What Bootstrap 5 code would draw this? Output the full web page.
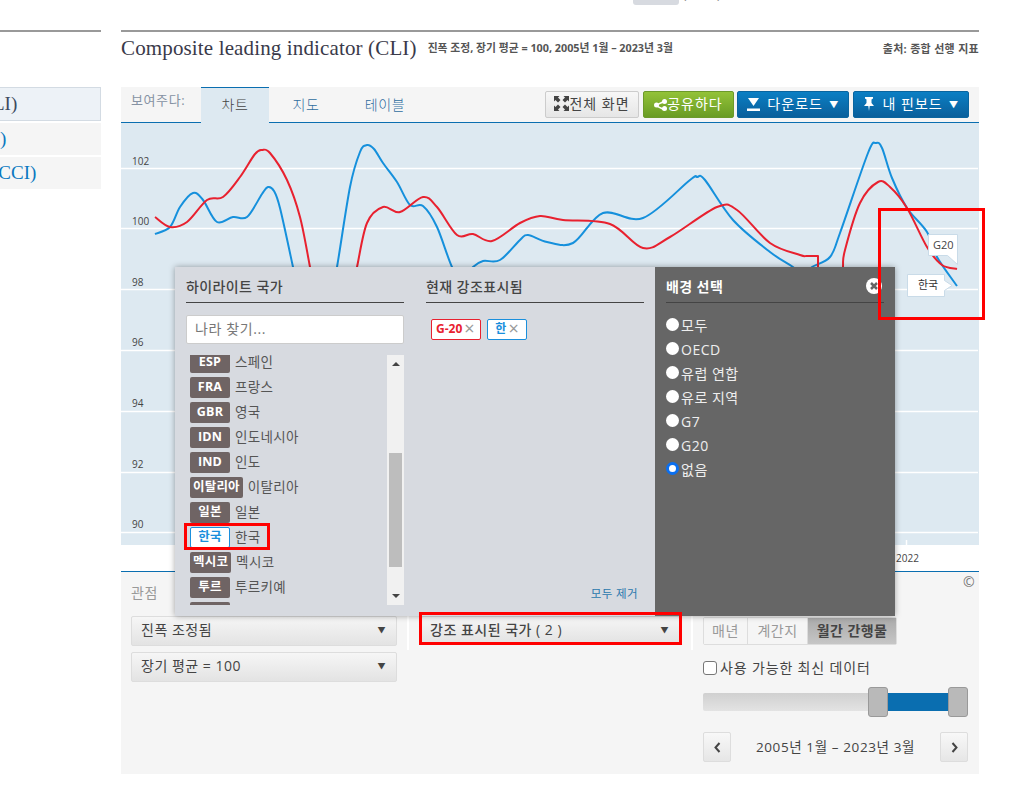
<!DOCTYPE html>
<html lang="ko">
<head>
<meta charset="utf-8">
<title>Composite leading indicator</title>
<link href="https://cdn.jsdelivr.net/npm/bootstrap@5.3.0/dist/css/bootstrap.min.css" rel="stylesheet">
<style>
body{position:relative;width:1035px;height:800px;overflow:hidden;background:#fff;font-family:"Open Sans","Noto Sans CJK KR",sans-serif;font-size:14px;color:#444;letter-spacing:.6px}
.topbar{height:30px;overflow:hidden;padding-left:633px;font-size:12px;color:#888}
.chip{display:inline-block;width:46px;height:20px;margin-top:-15px;background:#d7dae0;border-radius:3px;line-height:20px;text-align:center;color:#777}
.topnote{margin-left:4px;line-height:20px;margin-top:-15px}
.sidecol{width:101px;border-top:2px solid #999;padding-top:55px;font-family:"Liberation Serif","Noto Sans CJK KR",serif;font-size:19px;letter-spacing:0;overflow:hidden}
.sideitem{height:32px;line-height:31px;background:#f5f5f5;margin-bottom:2px;color:#0a78c0;white-space:nowrap}
.sideitem.on{height:34px;background:#edf2f7;border:1px solid #d3dbe3;border-left:0;color:#3b4a60;margin-bottom:2px;text-indent:-7px}
.sideitem.cut{text-indent:-8px}
.maincol{width:858px;margin-left:20px}
.titlerow{height:57px;border-top:2px solid #999;padding-top:3px}
.chart-title{font-family:"Liberation Serif",serif;font-size:21px;letter-spacing:.14px;color:#3a3a4a;line-height:26px;margin:0;font-weight:400}
.chart-sub{font-size:10.8px;font-weight:700;color:#555;letter-spacing:0;margin-left:11px}
.chart-src{font-size:11px;font-weight:700;color:#555;letter-spacing:.3px;padding-top:6px}
.tabbar{height:36px;background:#f5f5f5;border-bottom:1px solid #0a6eb0}
.show-lbl{width:80px;padding:4px 0 0 10px;color:#8592a3;font-size:13px}
.tabitem{height:36px;line-height:34px;text-align:center;color:#2f6d9f;border-top:1px solid transparent;font-weight:300}
.tabitem.on{width:68px;background:#dde9f1;color:#444;border-top-color:#0a6eb0;height:36px}
.tab-m{width:74px}
.tab-t{width:84px}
.tb{height:27px;border-radius:2px;font-size:14px;line-height:24px;white-space:nowrap;padding:0;text-align:center;letter-spacing:1px}
.tb svg{vertical-align:-2px}
.tb-gray{width:94px;background:linear-gradient(#f7f7f7,#e6e6e6);border:1px solid #ccc;color:#444;margin-right:4px}
.tb-green{width:91px;background:linear-gradient(#93c238,#699c24);border:1px solid #6c9a2a;color:#fff;margin-right:3px}
.tb-blue{background:linear-gradient(#0b7fc4,#0a5f9b);border:1px solid #0a659f;color:#fff}
.tb-dl{width:112px;margin-right:4px}
.tb-pin{width:116px}
.tb-arrow{font-size:9px;margin-left:3px;vertical-align:1px}
.tb-ic{margin-right:3px}
.toolset{padding:4px 10px 0 0;margin-left:auto;display:flex}
.chart-wrap{height:449px;border-bottom:1px solid #0a6eb0}
.chart-wrap svg{display:block}
.axis{font-size:10px;fill:#444;letter-spacing:0}
.panel-ctl{height:202px;background:#f5f5f5;position:relative}
.ctlcol{height:202px}
.ctl-a{width:287px;padding:10px 11px 0 10px}
.ctl-b{width:284px;padding:44px 12px 0 13px}
.ctl-c{width:287px;padding:45px 11px 0 11px}
.ctl-lbl{color:#999;font-size:14px;height:34px}
.dd{height:30px;line-height:26px;background:linear-gradient(#f6f6f6,#e3e3e3);border:1px solid #ddd;border-radius:2px;padding:0 10px 0 9px;margin-bottom:6px;display:flex;justify-content:space-between;color:#444;font-size:14px;letter-spacing:.5px}
.dd i{font-style:normal;font-size:8px;color:#444}
.dd-h{height:28px;line-height:25px;font-weight:500;padding-left:8px}
.dd-h b{font-weight:400}
.sepline{position:absolute;top:44px;width:2px;height:34px;background:#fff}
.sl1{left:286px}
.sl2{left:570px}
.seg{display:flex;height:28px;width:194px;font-size:14px;line-height:25px;text-align:center;border:1px solid #ddd;border-radius:2px;color:#999;letter-spacing:.5px}
.seg span{border-right:1px solid #ddd;background:#f5f5f5}
.seg .s1{width:44px}.seg .s2{width:60px}
.seg .s3{flex:1;background:linear-gradient(#aaa,#c6c6c6);color:#444;font-weight:700;border-right:0;letter-spacing:.4px}
.latest{margin-top:14px;height:18px;line-height:18px;letter-spacing:.85px}
.fake-check{width:14px;height:14px;border:1px solid #777;border-radius:3px;background:#fff;margin-right:3px}
.rng{position:relative;height:30px;margin-top:10px}
.rng-track{position:absolute;left:0;right:0;top:6px;height:18px;background:linear-gradient(#d0d0d0,#e3e3e3);border-radius:2px}
.rng-fill{position:absolute;left:165px;width:80px;top:6px;height:18px;background:#0a6eb0}
.rng-h{position:absolute;top:0;width:20px;height:30px;background:#b9b9b9;border:1px solid #999;border-radius:3px}
.h-a{left:165px}.h-b{left:245px}
.datenav{margin-top:15px;height:30px}
.navb{width:28px;height:30px;background:linear-gradient(#f8f8f8,#e6e6e6);border:1px solid #ddd;border-radius:2px;display:flex;align-items:center;justify-content:center}
.datetxt{font-size:13.5px}
.copy{position:absolute;left:842px;top:2px;color:#777;font-size:14px;line-height:16px;letter-spacing:0}
.popup{position:absolute;left:175px;top:267px;width:720px;height:349px;display:flex;background:#d7dae0;box-shadow:0 0 6px rgba(0,0,0,.35)}
.pcol{width:240px;padding:0 11px;position:relative}
.pcol.dark{background:#666;color:#eee}
.phead{height:36px;line-height:40px;border-bottom:1px solid #444;font-size:14px;font-weight:500;color:#444;letter-spacing:.4px}
.dark .phead{color:#fff;font-weight:700;border-color:#444}
.findbox{margin-top:12px;height:29px;width:218px;background:#fff;border:1px solid #ccc;border-radius:2px;padding-left:8px;line-height:25px;color:#777;font-size:14px}
.listbox{margin-top:11px;height:250px;width:218px;position:relative;overflow:hidden}
.rowc{display:flex;align-items:center;height:25px;padding-left:4px;font-size:13.5px;color:#555;white-space:nowrap;letter-spacing:.35px}
.code{min-width:40px;height:21px;line-height:20px;padding:0 3px;margin-right:5px;background:#6f6464;color:#fff;font-weight:700;font-size:12.5px;border-radius:2px;text-align:center;letter-spacing:.2px}
.code.sel{background:#fff;color:#1a8fdc;border:1px solid #1a8fdc;line-height:18px}
.lst{margin-top:-5px}
.sbar{position:absolute;right:0;top:0;width:17px;height:250px;background:#f1f1f1}
.sthumb{position:absolute;left:2px;top:98px;width:13px;height:114px;background:#bdbdbd}
.sarr-u,.sarr-d{position:absolute;left:5px;width:0;height:0;border-left:4px solid transparent;border-right:4px solid transparent}
.sarr-u{top:7px;border-bottom:4px solid #444}
.sarr-d{bottom:7px;border-top:4px solid #444}
.tagrow{display:flex;gap:6px;margin-top:16px;padding-left:5px}
.tagx{height:21px;line-height:18px;background:#fff;border:1px solid;border-radius:2px;font-size:12px;font-weight:700;padding:0 4px;letter-spacing:0;white-space:nowrap}
.tagx em{font-style:normal;font-weight:400;color:#999;font-size:18px;margin-left:2px;line-height:15px;vertical-align:-2px}
.tag-r{width:50px;border-color:#e8212f;color:#e8212f}
.tag-b{width:40px;border-color:#1a8fdc;color:#1a8fdc;text-align:center}
.rm-all{position:absolute;right:17px;bottom:14px;font-size:11.5px;color:#2a78ad;letter-spacing:.4px}
.radios{margin-top:10px}
.radline{height:24px;display:flex;align-items:center;font-size:14px;color:#eee;letter-spacing:.5px}
.dot{width:13px;height:13px;background:#fff;border-radius:50%;margin-right:2px;margin-top:-2px;flex:none}
.dot.on{border:3px solid #0a6ff0;background:#fff}
.xclose{position:absolute;right:13px;top:11px}
.redbox{position:absolute;border:3px solid #f00;pointer-events:none}
.rb1{left:878px;top:208px;width:107px;height:112px}
.rb2{left:184px;top:523px;width:86px;height:27px}
.rb3{left:419px;top:612px;width:263px;height:33px}
</style>
</head>
<body>
<div class="topbar d-flex align-items-start"><span class="chip">인공물</span><span class="topnote">(2023)</span></div>
<div class="d-flex">
  <div class="sidecol">
    <div class="sideitem on">LI)</div>
    <div class="sideitem">)</div>
    <div class="sideitem cut">(CCI)</div>
  </div>
  <div class="maincol">
    <div class="titlerow d-flex align-items-start justify-content-between">
      <div class="d-flex align-items-center"><h1 class="chart-title">Composite leading indicator (CLI)</h1><span class="chart-sub">진폭 조정, 장기 평균 = 100, 2005년 1월 – 2023년 3월</span></div>
      <div class="chart-src">출처: 종합 선행 지표</div>
    </div>
    <div class="tabbar d-flex">
      <div class="show-lbl">보여주다:</div>
      <div class="tabitem on">차트</div>
      <div class="tabitem tab-m">지도</div>
      <div class="tabitem tab-t">테이블</div>
      <div class="toolset">
        <div class="tb tb-gray"><svg width="15" height="15" viewBox="0 0 15 15" fill="#444"><path d="M0 0h5.500L4 1.500 6.500 4 4 6.500 1.500 4 0 5.500zM15 0v5.500L13.500 4 11 6.500 8.500 4 11 1.500 9.500 0zM0 15V9.500L1.500 11 4 8.500 6.500 11 4 13.500 5.500 15zM15 15H9.500L11 13.500 8.500 11 11 8.500 13.500 11 15 9.500z"/></svg>전체 화면</div>
        <div class="tb tb-green"><svg width="13" height="12" viewBox="0 0 13 12" fill="#fff"><circle cx="2.500" cy="6" r="2.500"/><circle cx="10.500" cy="2.500" r="2.500"/><circle cx="10.500" cy="9.500" r="2.500"/><path d="M2 5.500l8-4 1 1.500-8 3.500 8 3.500-1 1.500-8-4z"/></svg>공유하다</div>
        <div class="tb tb-blue tb-dl"><svg class="tb-ic" width="13" height="13" viewBox="0 0 13 13" fill="#fff"><path d="M1 0h11L6.500 8zM0 10.500h13V13H0z"/></svg> 다운로드<span class="tb-arrow"> ▼</span></div>
        <div class="tb tb-blue tb-pin"><svg class="tb-ic" width="12" height="14" viewBox="0 0 12 14" fill="#fff"><path d="M2 0h8v1.500L8.500 2.500V6L11 9H6.700L6 14l-.7-5H1l2.500-3V2.500L2 1.500z"/></svg> 내 핀보드<span class="tb-arrow"> ▼</span></div>
      </div>
    </div>
    <div class="chart-wrap">
      <svg width="858" height="448" viewBox="121 123 858 448">
        <rect x="121" y="123" width="858" height="422" fill="#dde9f1"/>
        <g stroke="#fff" stroke-width="1.500">
          <path d="M121 168.500H978M121 228.500H978M121 289.500H978M121 350.500H978M121 411.500H978M121 472.500H978M121 532.500H978"/>
          <path d="M906.500 540V545"/>
        </g>
        <text class="axis" x="132" y="165">102</text>
        <text class="axis" x="132" y="225">100</text>
        <text class="axis" x="132" y="286">98</text>
        <text class="axis" x="132" y="346">96</text>
        <text class="axis" x="132" y="407">94</text>
        <text class="axis" x="132" y="468">92</text>
        <text class="axis" x="132" y="528">90</text>
        <text class="axis" x="896" y="562">2022</text>
        <path id="lineB" fill="none" stroke="#1590dc" stroke-width="2" stroke-linejoin="round"/>
        <path id="lineR" fill="none" stroke="#e8212f" stroke-width="2" stroke-linejoin="round"/>
        <path d="M928.500 234.500H957.500V264.500L947.500 255.500H928.500Z" fill="#fff" stroke="#c9dbe8"/>
        <text x="933" y="249" font-size="11" fill="#444" style="letter-spacing:0">G20</text>
        <path d="M907.500 274.500H944.500V280.500L952 285.500 944.500 290.500V296.500H907.500Z" fill="#fff" stroke="#c9dbe8"/>
        <text x="918" y="289" font-size="11" fill="#333" style="letter-spacing:0">한국</text>
      </svg>
    </div>
    <div class="panel-ctl d-flex">
      <div class="ctlcol ctl-a">
        <div class="ctl-lbl">관점</div>
        <div class="dd"><span>진폭 조정됨</span><i>▼</i></div>
        <div class="dd"><span>장기 평균 = 100</span><i>▼</i></div>
      </div>
      <div class="ctlcol ctl-b">
        <div class="dd dd-h"><span>강조 표시된 국가 <b>( 2 )</b></span><i>▼</i></div>
      </div>
      <div class="ctlcol ctl-c">
        <div class="seg"><span class="s1">매년</span><span class="s2">계간지</span><span class="s3">월간 간행물</span></div>
        <div class="latest d-flex align-items-center"><span class="fake-check"></span>사용 가능한 최신 데이터</div>
        <div class="rng"><div class="rng-track"></div><div class="rng-fill"></div><div class="rng-h h-a"></div><div class="rng-h h-b"></div></div>
        <div class="datenav d-flex justify-content-between align-items-center">
          <div class="navb"><svg width="7" height="11" viewBox="0 0 7 11"><path d="M5.500 1L1.500 5.500 5.500 10" fill="none" stroke="#444" stroke-width="2"/></svg></div>
          <span class="datetxt">2005년 1월 – 2023년 3월</span>
          <div class="navb"><svg width="7" height="11" viewBox="0 0 7 11"><path d="M1.500 1L5.500 5.500 1.500 10" fill="none" stroke="#444" stroke-width="2"/></svg></div>
        </div>
      </div>
      <div class="sepline sl1"></div>
      <div class="sepline sl2"></div>
      <div class="copy">©</div>
    </div>
  </div>
</div>

<div class="popup">
  <div class="pcol">
    <div class="phead">하이라이트 국가</div>
    <div class="findbox">나라 찾기...</div>
    <div class="listbox">
      <div class="lst">
        <div class="rowc"><span class="code">ESP</span>스페인</div>
        <div class="rowc"><span class="code">FRA</span>프랑스</div>
        <div class="rowc"><span class="code">GBR</span>영국</div>
        <div class="rowc"><span class="code">IDN</span>인도네시아</div>
        <div class="rowc"><span class="code">IND</span>인도</div>
        <div class="rowc"><span class="code">이탈리아</span>이탈리아</div>
        <div class="rowc"><span class="code">일본</span>일본</div>
        <div class="rowc"><span class="code sel">한국</span>한국</div>
        <div class="rowc"><span class="code">멕시코</span>멕시코</div>
        <div class="rowc"><span class="code">투르</span>투르키예</div>
        <div class="rowc"><span class="code"></span></div>
      </div>
      <div class="sbar"><div class="sarr-u"></div><div class="sthumb"></div><div class="sarr-d"></div></div>
    </div>
  </div>
  <div class="pcol">
    <div class="phead">현재 강조표시됨</div>
    <div class="tagrow"><span class="tagx tag-r">G-20<em>×</em></span><span class="tagx tag-b">한<em>×</em></span></div>
    <div class="rm-all">모두 제거</div>
  </div>
  <div class="pcol dark">
    <div class="phead">배경 선택</div>
    <svg class="xclose" width="16" height="16" viewBox="0 0 16 16"><circle cx="8" cy="8" r="8" fill="#fff"/><path d="M5 5l6 6M11 5l-6 6" stroke="#666" stroke-width="2.500"/></svg>
    <div class="radios">
      <div class="radline"><span class="dot"></span>모두</div>
      <div class="radline"><span class="dot"></span>OECD</div>
      <div class="radline"><span class="dot"></span>유럽 연합</div>
      <div class="radline"><span class="dot"></span>유로 지역</div>
      <div class="radline"><span class="dot"></span>G7</div>
      <div class="radline"><span class="dot"></span>G20</div>
      <div class="radline"><span class="dot on"></span>없음</div>
    </div>
  </div>
</div>
<div class="redbox rb1"></div>
<div class="redbox rb2"></div>
<div class="redbox rb3"></div>

<script src="https://cdn.jsdelivr.net/npm/bootstrap@5.3.0/dist/js/bootstrap.bundle.min.js"></script>
<script>
function cr(p){var d="M"+p[0][0]+" "+p[0][1];for(var i=0;i<p.length-1;i++){var a=p[i-1]||p[i],b=p[i],c=p[i+1],e=p[i+2]||c;
if(b[2]==='s'){d+="L"+c[0]+" "+c[1];continue}
d+="C"+(b[0]+(c[0]-a[0])/6).toFixed(1)+" "+(b[1]+(c[1]-a[1])/6).toFixed(1)+" "+(c[0]-(e[0]-b[0])/6).toFixed(1)+" "+(c[1]-(e[1]-b[1])/6).toFixed(1)+" "+c[0]+" "+c[1]}return d}
var blue=[[155,234],[170,227],[180,207],[193,193],[203,200],[217,222],[233,217],[247,217],[262,194],[268,187],[274,191],[280,208],[293,267],[300,300],[320,330],[330,300],[337,267],[350,187],[360,152],[367,145],[374,149],[383,163],[397,182],[410,205],[423,206],[437,227],[452,267],[462,280],[473,267],[483,261],[500,260],[520,240],[528,235],[547,242],[573,243],[603,213],[643,218],[690,180],[697,177],[705,180],[733,220],[770,252],[793,267],[803,275],[812,267],[830,257],[840,233],[868,153],[876,143],[882,148],[892,178],[907,208],[927,232],[937,257],[957,286]];
var red=[[155,217],[170,227],[187,222],[207,200],[223,197],[240,177],[255,154],[262,150],[270,153],[287,180],[300,217],[310,267],[318,310],[340,330],[350,300],[357,267],[367,223],[383,207],[400,212],[423,197],[437,207],[457,235],[473,234],[492,241],[520,223],[540,216],[563,220],[610,224],[643,248],[670,237],[717,207],[737,210],[770,243],[800,255],[807,256,'s'],[818,256,'s'],[818,300,'s'],[843,300,'s'],[843,267],[845,250],[860,203],[878,182],[890,187],[907,208],[927,247],[942,265],[957,269]];
document.getElementById('lineB').setAttribute('d',cr(blue));
document.getElementById('lineR').setAttribute('d',cr(red));
</script>
</body>
</html>
